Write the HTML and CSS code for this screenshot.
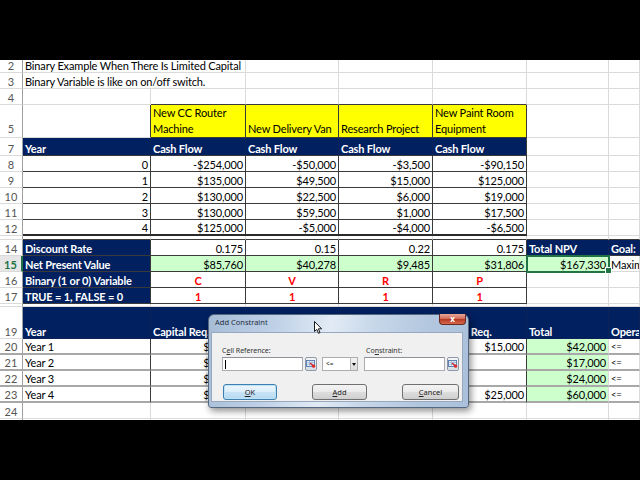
FILE: index.html
```html
<!DOCTYPE html>
<html lang="en">
<head>
    <meta charset="UTF-8">
    <title>Binary Example - Add Constraint</title>
    <link rel="stylesheet" href="styles.css">
</head>
<body>
    <div class="screen">
        <!-- Worksheet -->
        <div class="sheet">
            <div class="row">
                <div class="rh">2</div><div class="wide">Binary Example When There Is Limited Capital</div><div></div><div></div><div></div><div></div><div></div>
            </div>
            <div class="row">
                <div class="rh">3</div><div class="wide">Binary Variable is like on on/off switch.</div><div></div><div></div><div></div><div></div><div></div>
            </div>
            <div class="row">
                <div class="rh">4</div><div></div><div class="bb"></div><div class="bb"></div><div class="bb"></div><div class="bb"></div><div></div><div></div>
            </div>
            <div class="row r5">
                <div class="rh">5</div><div class="br"></div>
                <div class="yel br bb">New CC Router<br>Machine</div>
                <div class="yel br bb">New Delivery Van</div>
                <div class="yel br bb">Research Project</div>
                <div class="yel br bb">New Paint Room<br>Equipment</div>
                <div></div><div></div>
            </div>
            <div class="row r7">
                <div class="rh">7</div>
                <div class="navy bb">Year</div>
                <div class="navy bb">Cash Flow</div>
                <div class="navy bb">Cash Flow</div>
                <div class="navy bb">Cash Flow</div>
                <div class="navy bb br">Cash Flow</div>
                <div></div><div></div>
            </div>
            <div class="row">
                <div class="rh">8</div><div class="num br bb">0</div><div class="num br bb">-$254,000</div><div class="num br bb">-$50,000</div><div class="num br bb">-$3,500</div><div class="num br bb">-$90,150</div><div></div><div></div>
            </div>
            <div class="row">
                <div class="rh">9</div><div class="num br bb">1</div><div class="num br bb">$135,000</div><div class="num br bb">$49,500</div><div class="num br bb">$15,000</div><div class="num br bb">$125,000</div><div></div><div></div>
            </div>
            <div class="row">
                <div class="rh">10</div><div class="num br bb">2</div><div class="num br bb">$130,000</div><div class="num br bb">$22,500</div><div class="num br bb">$6,000</div><div class="num br bb">$19,000</div><div></div><div></div>
            </div>
            <div class="row">
                <div class="rh">11</div><div class="num br bb">3</div><div class="num br bb">$130,000</div><div class="num br bb">$59,500</div><div class="num br bb">$1,000</div><div class="num br bb">$17,500</div><div></div><div></div>
            </div>
            <div class="row">
                <div class="rh">12</div><div class="num br bb2">4</div><div class="num br bb2">$125,000</div><div class="num br bb2">-$5,000</div><div class="num br bb2">-$4,000</div><div class="num br bb2">-$6,500</div><div></div><div></div>
            </div>
            <div class="row r13">
                <div class="rh"></div><div class="bb"></div><div class="bb"></div><div class="bb"></div><div class="bb"></div><div class="bb"></div><div class="bb"></div><div class="bb"></div>
            </div>
            <div class="row">
                <div class="rh">14</div>
                <div class="navy br bb">Discount Rate</div>
                <div class="num br bb">0.175</div><div class="num br bb">0.15</div><div class="num br bb">0.22</div><div class="num br bb">0.175</div>
                <div class="navy bb">Total NPV</div><div class="navy bb">Goal:</div>
            </div>
            <div class="row">
                <div class="rh active">15</div>
                <div class="navy br bb">Net Present Value</div>
                <div class="num grn br bb">$85,760</div><div class="num grn br bb">$40,278</div><div class="num grn br bb">$9,485</div><div class="num grn br bb">$31,806</div>
                <div class="num grn selected">$167,330</div><div>Maximize</div>
            </div>
            <div class="row">
                <div class="rh">16</div>
                <div class="navy br bb">Binary (1 or 0) Variable</div>
                <div class="ctr red br bb">C</div><div class="ctr red br bb">V</div><div class="ctr red br bb">R</div><div class="ctr red br bb">P</div>
                <div></div><div></div>
            </div>
            <div class="row">
                <div class="rh">17</div>
                <div class="navy br bb">TRUE = 1, FALSE = 0</div>
                <div class="ctr red br bb">1</div><div class="ctr red br bb">1</div><div class="ctr red br bb">1</div><div class="ctr red br bb">1</div>
                <div></div><div></div>
            </div>
            <div class="row r18">
                <div class="rh"></div><div></div><div></div><div></div><div></div><div></div><div></div><div></div>
            </div>
            <div class="row r19">
                <div class="rh">19</div>
                <div class="navy">Year</div>
                <div class="navy">Capital Req.</div><div class="navy">Capital Req.</div><div class="navy">Capital Req.</div><div class="navy">Capital Req.</div>
                <div class="navy">Total</div><div class="navy">Operator</div>
            </div>
            <div class="row cap">
                <div class="rh">20</div><div class="br">Year 1</div><div class="num">$12,000</div><div class="num">$10,000</div><div class="num">$5,000</div><div class="num br">$15,000</div><div class="num grn">$42,000</div><div class="op">&lt;=</div>
            </div>
            <div class="row cap">
                <div class="rh">21</div><div class="br">Year 2</div><div class="num">$10,000</div><div class="num">$4,000</div><div class="num">$3,000</div><div class="num br"></div><div class="num grn">$17,000</div><div class="op">&lt;=</div>
            </div>
            <div class="row cap">
                <div class="rh">22</div><div class="br">Year 3</div><div class="num">$17,000</div><div class="num">$5,000</div><div class="num">$2,000</div><div class="num br"></div><div class="num grn">$24,000</div><div class="op">&lt;=</div>
            </div>
            <div class="row cap">
                <div class="rh">23</div><div class="br">Year 4</div><div class="num">$20,000</div><div class="num">$10,000</div><div class="num">$5,000</div><div class="num br">$25,000</div><div class="num grn">$60,000</div><div class="op">&lt;=</div>
            </div>
            <div class="row">
                <div class="rh">24</div><div></div><div></div><div></div><div></div><div></div><div></div><div></div>
            </div>
            <div class="row">
                <div class="rh">25</div><div></div><div></div><div></div><div></div><div></div><div></div><div></div>
            </div>
        </div>

        <!-- Solver dialog -->
        <div class="dialog">
            <div class="dialog-title">
                <span>Add Constraint</span>
                <span class="close">x</span>
            </div>
            <div class="dialog-body">
                <div class="fields">
                    <div class="field">
                        <label>C<u>e</u>ll Reference:</label>
                        <div class="input-row">
                            <span class="input"><span class="caret"></span></span>
                            <span class="refbtn">
                                <svg width="10" height="10" viewBox="0 0 10 10">
                                    <rect x="0.5" y="1.5" width="8" height="6" fill="#e4eefa" stroke="#5b7fae"/>
                                    <path d="M0.5 3.5H8.5M0.5 5.5H8.5M3.5 1.5V7.5M6 1.5V7.5" stroke="#8fa9cc" stroke-width="0.6"/>
                                    <path d="M4 4L8 7.5" stroke="#d42020" stroke-width="1.2"/>
                                    <circle cx="7.6" cy="7.2" r="1.6" fill="#e02828"/>
                                </svg>
                            </span>
                        </div>
                    </div>
                    <span class="select">&lt;=<span class="arrow"></span></span>
                    <div class="field field-right">
                        <label>Co<u>n</u>straint:</label>
                        <div class="input-row">
                            <span class="input"></span>
                            <span class="refbtn">
                                <svg width="10" height="10" viewBox="0 0 10 10">
                                    <rect x="0.5" y="1.5" width="8" height="6" fill="#e4eefa" stroke="#5b7fae"/>
                                    <path d="M0.5 3.5H8.5M0.5 5.5H8.5M3.5 1.5V7.5M6 1.5V7.5" stroke="#8fa9cc" stroke-width="0.6"/>
                                    <path d="M4 4L8 7.5" stroke="#d42020" stroke-width="1.2"/>
                                    <circle cx="7.6" cy="7.2" r="1.6" fill="#e02828"/>
                                </svg>
                            </span>
                        </div>
                    </div>
                </div>
                <div class="buttons">
                    <span class="btn btn-default"><u>O</u>K</span>
                    <span class="btn btn-add"><u>A</u>dd</span>
                    <span class="btn btn-cancel"><u>C</u>ancel</span>
                </div>
            </div>
        </div>

        <!-- Mouse pointer -->
        <svg class="pointer" width="9" height="13" viewBox="0 0 9 13">
            <path d="M0.5 0.5V10.5L2.8 8.4L4.5 12.3L6 11.6L4.4 7.8H7.6Z" fill="#fff" stroke="#000" stroke-width="0.9" stroke-linejoin="round"/>
        </svg>
    </div>
</body>
</html>
```

FILE: styles.css
```css
* {
    margin: 0;
    padding: 0;
    box-sizing: border-box;
}

body {
    background: #000;
    width: 640px;
    height: 480px;
    overflow: hidden;
    font-family: Lato, 'Liberation Sans', sans-serif;
}

/* Video frame: black bars top and bottom */
.screen {
    position: relative;
    margin-top: 60px;
    height: 360px;
    overflow: hidden;
    background: #fff;
}

.sheet {
    margin-top: -3px;
}

/* Grid rows */
.row {
    display: grid;
    grid-template-columns: 23px 128px 95px 93px 94px 94px 82px 31px;
    height: 16px;
}

.r5 { height: 33px; }
.r7 { height: 18px; }
.r13 { height: 4px; }
.r18 { height: 3px; }
.r19 { height: 32px; }

.row > div {
    display: flex;
    align-items: flex-end;
    padding: 0 2px;
    border-right: 1px solid #dadada;
    border-bottom: 1px solid #dadada;
    font-size: 11px;
    letter-spacing: -0.15px;
    line-height: 12px;
    color: #000;
    white-space: nowrap;
    overflow: hidden;
}

.row > .wide {
    grid-column: span 2;
    overflow: visible;
}

.row > .rh {
    justify-content: center;
    padding: 0;
    color: #555;
    font-size: 11px;
    letter-spacing: 0;
    border-right-color: #a0a0a0;
}

.row > .rh.active {
    color: #217346;
    font-weight: bold;
    background: #e6e6e6;
    border-right: 2px solid #217346;
}

.r5 > div {
    line-height: 16px;
}

/* Cell formats */
.row > .num { justify-content: flex-end; }
.row > .ctr { justify-content: center; }

.row > .navy {
    background: #002060;
    color: #fff;
    font-weight: bold;
    border-color: #0b2358;
}

.row > .yel { background: #ffff00; }
.row > .grn { background: #ccffcc; }

.row > .red {
    color: #ff0000;
    font-weight: bold;
}

.row > .br { border-right-color: #3a3a3a; }
.row > .bb { border-bottom-color: #3a3a3a; }
.row > .bb2 { border-bottom: 2px solid #2a2a2a; }

.cap > div {
    border-bottom: 2px solid #a8a8a8;
}

.cap > .op {
    font-size: 9.5px;
}

/* Active cell */
.row > .selected {
    position: relative;
    overflow: visible;
    outline: 2px solid #217346;
    outline-offset: -1px;
}

.selected::after {
    content: '';
    position: absolute;
    right: -4px;
    bottom: -3px;
    width: 5px;
    height: 5px;
    background: #217346;
    border: 1px solid #fff;
}

/* Add Constraint dialog */
.dialog {
    position: absolute;
    left: 208px;
    top: 254px;
    width: 261px;
    height: 94px;
    display: flex;
    flex-direction: column;
    padding: 0 5px 5px 2px;
    border: 1px solid #56687f;
    border-radius: 6px 6px 3px 3px;
    background: linear-gradient(100deg, #a6bcd6 0%, #bfd1e7 25%, #e2ebf5 45%, #c8d8ea 60%, #b3c7df 80%, #aac0da 100%);
    box-shadow: 2px 3px 7px rgba(0, 0, 0, 0.45);
    font-family: 'Noto Sans', 'DejaVu Sans', sans-serif;
}

.dialog-title {
    height: 17px;
    display: flex;
    justify-content: space-between;
    padding-left: 4px;
    font-size: 7.5px;
    line-height: 15px;
    color: #1f2e40;
}

.close {
    width: 27px;
    height: 11px;
    margin-top: -1px;
    margin-right: -3px;
    border: 1px solid #6a2a20;
    border-top: none;
    border-radius: 0 0 4px 4px;
    background: linear-gradient(#e9a797 0%, #d0705e 45%, #b83a26 55%, #d56a4c 100%);
    color: #fff;
    font-weight: bold;
    font-size: 8px;
    line-height: 9px;
    text-align: center;
}

.dialog-body {
    flex: 1;
    background: #f0f0f0;
    border: 1px solid #98a9bf;
    padding: 13px 0 0 10px;
}

.fields {
    display: flex;
    align-items: flex-end;
}

.field label {
    display: block;
    height: 11px;
    font-size: 7px;
    line-height: 9px;
    color: #333;
}

.field-right label {
    padding-left: 2px;
}

.input-row {
    display: flex;
    gap: 2px;
}

.input {
    width: 81px;
    height: 14px;
    background: #fff;
    border: 1px solid #abadb3;
    border-top-color: #8e9197;
    padding: 2px 0 0 2px;
}

.caret {
    display: block;
    width: 1px;
    height: 9px;
    background: #000;
}

.refbtn {
    width: 12px;
    height: 14px;
    border: 1px solid #8d98a8;
    border-radius: 2px;
    background: linear-gradient(#f6f6f6, #d8dde4);
    display: flex;
    align-items: center;
    justify-content: center;
}

.select {
    position: relative;
    width: 36px;
    height: 14px;
    margin: 0 6px 0 5px;
    padding-left: 3px;
    background: #fff;
    border: 1px solid #abadb3;
    font-size: 6.5px;
    line-height: 12px;
    color: #222;
}

.arrow {
    position: absolute;
    right: 0;
    top: 0;
    width: 7px;
    height: 12px;
    border-left: 1px solid #b8b8b8;
    background: linear-gradient(#f4f4f4, #dcdcdc);
}

.arrow::after {
    content: '';
    position: absolute;
    left: 1px;
    top: 5px;
    border-left: 2px solid transparent;
    border-right: 2px solid transparent;
    border-top: 3px solid #111;
}

.buttons {
    display: flex;
    gap: 35px;
    margin-top: 13px;
    padding-left: 1px;
}

.btn {
    height: 16px;
    border: 1px solid #707070;
    border-radius: 3px;
    background: linear-gradient(#f3f3f3 0%, #ebebeb 48%, #dddddd 52%, #cfcfcf 100%);
    font-size: 7.5px;
    line-height: 14px;
    color: #222;
    text-align: center;
}

.btn-default {
    width: 54px;
    border-color: #3c7fb1;
    background: linear-gradient(#edf6fc 0%, #ddeefa 48%, #c8e3f6 52%, #b6d8ef 100%);
    box-shadow: inset 0 0 0 1px #bfe2f6;
}

.btn-add { width: 55px; }
.btn-cancel { width: 57px; }

.pointer {
    position: absolute;
    left: 314px;
    top: 261px;
}
```
